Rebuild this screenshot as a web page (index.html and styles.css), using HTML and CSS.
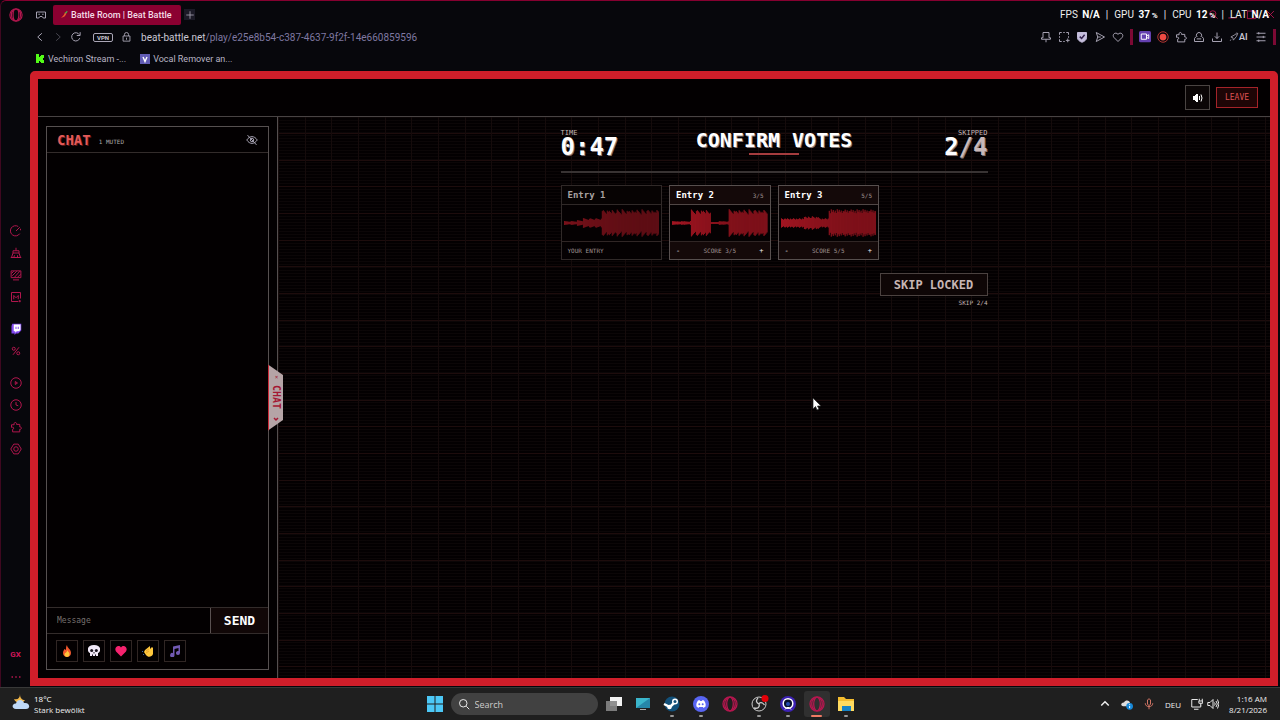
FILE: index.html
```html
<!DOCTYPE html>
<html lang="en">
<head>
    <meta charset="UTF-8">
    <meta name="viewport" content="width=device-width, initial-scale=1.0">
    <title>Battle Room | Beat Battle</title>
    <link rel="stylesheet" href="styles.css">
</head>
<body>
    <svg class="sprite" aria-hidden="true">
        <symbol id="opera" viewBox="0 0 16 16"><circle cx="8" cy="8" r="7"/><ellipse cx="8" cy="8" rx="3.3" ry="6.8"/><path d="M5.5 2C1.8 4.500 1.800 11.500 5.500 14M10.500 2c3.700 2.500 3.700 9.500 0 12"/></symbol>
        <symbol id="puzzle" viewBox="0 0 16 16"><path d="M2 5h3.500C4.500 1 9.500 1 8.700 4.500H13V8c3-.5 3 3.500 0 3v3.500H3.500V11C6 10.500 5.500 7.500 2 8.500z"/></symbol>
    </svg>

    <div class="browser">
        <div class="tab-strip">
            <button class="icon-btn opera-menu" aria-label="Opera menu"><svg class="icon pink"><use href="#opera"/></svg></button>
            <button class="icon-btn" aria-label="Workspaces"><svg class="icon" viewBox="0 0 16 16"><path d="M2 4h12v8h-3l-1.500-2h-3L5 12H2zM4.500 7h2M9.500 7h2"/></svg></button>
            <div class="tab">
                <svg class="pepper" viewBox="0 0 10 10"><path d="M8 2.500C8 6 5 9 1 9c2-1 3.500-3 5-6z" fill="#ed5a2c"/><path d="M6 3l2-.5L9 .5" stroke="#47b04b" stroke-width="1.300" fill="none"/></svg>
                <span>Battle Room | Beat Battle</span>
            </div>
            <button class="new-tab" aria-label="New tab"><svg class="icon" viewBox="0 0 16 16"><path d="M8 2v12M2 8h12"/></svg></button>
            <div class="window-buttons">
                <svg class="icon pink" viewBox="0 0 16 16"><circle cx="7" cy="7" r="4.500"/><path d="M10.500 10.500L14 14"/></svg>
                <svg class="icon pink" viewBox="0 0 16 16"><path d="M2 13h12"/></svg>
                <svg class="icon pink" viewBox="0 0 16 16"><path d="M2 3h12v11H2z"/></svg>
                <svg class="icon pink" viewBox="0 0 16 16"><path d="M3 3l10 10M13 3L3 13"/></svg>
            </div>
            <div class="stats">
                <span>FPS <b>N/A</b></span><i>|</i><span>GPU <b>37<small> %</small></b></span><i>|</i><span>CPU <b>12<small> %</small></b></span><i>|</i><span>LAT <b>N/A</b></span>
            </div>
        </div>

        <div class="address-bar">
            <div class="nav-buttons">
                <button class="icon-btn" aria-label="Back"><svg class="icon" viewBox="0 0 16 16"><path d="M10.500 3L5 8l5.500 5"/></svg></button>
                <button class="icon-btn dim" aria-label="Forward"><svg class="icon" viewBox="0 0 16 16"><path d="M5.500 3L11 8l-5.500 5"/></svg></button>
                <button class="icon-btn" aria-label="Reload"><svg class="icon" viewBox="0 0 16 16"><path d="M13 9.500A5.500 5.500 0 1 1 12.500 5M13.500 1.500V6H9"/></svg></button>
            </div>
            <span class="vpn">VPN</span>
            <svg class="icon lock" viewBox="0 0 16 16"><path d="M3 6.500h10V14H3zM5 6.500V4.500a3 3 0 0 1 6 0v2M8 9v3"/></svg>
            <div class="url">beat-battle.net<span>/play/e25e8b54-c387-4637-9f2f-14e660859596</span></div>
            <div class="extensions">
                <svg class="icon" viewBox="0 0 16 16"><path d="M4 2h8v7h2v2H2V9h2zM8 11v4"/></svg>
                <svg class="icon" viewBox="0 0 16 16"><path d="M2 5V2h3M7 2h2M11 2h3v3M14 7v2M2 7v2M2 11v3h3M7 14h2M13 10v5M10.500 12.500h5"/></svg>
                <svg class="icon" viewBox="0 0 16 16"><path d="M2 2h12v7c0 3-3 5-6 6-3-1-6-3-6-6z" fill="#c5bedd" stroke="#c5bedd"/><path d="M5 7.500L7.500 10 11.500 5" stroke="#34224e" stroke-width="2"/></svg>
                <svg class="icon" viewBox="0 0 16 16"><path d="M3 2l11 6-11 6 2-6zM5 8h4"/></svg>
                <svg class="icon" viewBox="0 0 16 16"><path d="M8 14L2.500 8.500C-.5 4.500 5 .5 8 4.500c3-4 8.500 0 5.500 4z"/></svg>
                <i class="divider"></i>
                <svg class="icon" viewBox="0 0 16 16"><rect width="16" height="15" rx="2" fill="#6440b0" stroke="none"/><path d="M3 4h7v7H3zM10 6.500l3-1.500v5l-3-1.500" stroke="#fff"/></svg>
                <svg class="icon" viewBox="0 0 16 16"><circle cx="8" cy="8" r="7" stroke="#b63633"/><circle cx="8" cy="8" r="4.500" fill="#f04a43" stroke="none"/></svg>
                <svg class="icon"><use href="#puzzle"/></svg>
                <svg class="icon" viewBox="0 0 16 16"><path d="M5.500 8a3.500 3.500 0 1 1 5 0M4 7.500L2 10v4h12v-4l-2-2.500M5 10.500h6"/></svg>
                <svg class="icon" viewBox="0 0 16 16"><path d="M8 2v8M5 7l3 3 3-3M2 10v4h12v-4"/></svg>
                <span class="ai"><svg class="icon" viewBox="0 0 16 16"><path d="M3 8l7-4 4-2-2 5-5 6-1-4zM3 12l-1 2M11 2l1-1"/></svg>AI</span>
                <svg class="icon" viewBox="0 0 16 16"><path d="M2 3h12M2 8h12M2 13h12M5 1.500v3M11 6.500v3M5 11.500v3"/></svg>
                <i class="divider"></i>
            </div>
        </div>

        <div class="bookmarks">
            <a href="#"><svg viewBox="0 0 10 10"><path d="M1 0h3v3h1V2h1V1h3v3H8v2h1v3H6V8H5V7H4v2H1z" fill="#53fc18"/></svg>Vechiron Stream -...</a>
            <a href="#"><svg viewBox="0 0 10 10"><rect width="10" height="10" fill="#625cb5"/><path d="M3 3l2 4.500L7 3" fill="none" stroke="#fff" stroke-width="1.400"/></svg>Vocal Remover an...</a>
        </div>

        <div class="workarea">
            <nav class="side-nav" aria-label="Browser sidebar">
                <svg class="icon pink" viewBox="0 0 16 16"><path d="M13 11.500A6.800 6.800 0 1 1 11 2M8 8l5-5M14 5v2"/></svg>
                <svg class="icon pink" viewBox="0 0 16 16"><path d="M8 1v4M4 5h8v3H4zM4 8l-2 6h12l-2-6M5 14l1-3M10 14v-3M1 14h14"/></svg>
                <svg class="icon pink" viewBox="0 0 16 16"><path d="M1.500 2.500h13v9h-13zM3 9l6-6M6 11l7-8M10 11l4-4M2 6l3-3M4 14.500h8"/></svg>
                <svg class="icon pink" viewBox="0 0 16 16"><path d="M14 10V2H2v12h9M5 11V6l3 3 3-3v5M13 12v3M11.500 13.500h3"/></svg>
                <svg class="icon group-start" viewBox="0 0 16 16"><path d="M3 1h12v9l-4 4H8l-2 2v-2H2V4z" fill="#8048ed" stroke="none"/><path d="M5 2h9v7l-2 2H9l-2 2v-2H5z" fill="#fff" stroke="none"/><path d="M8 5v3M11 5v3" stroke="#8048ed"/></svg>
                <svg class="icon pink" viewBox="0 0 16 16"><circle cx="5" cy="5" r="2"/><circle cx="11" cy="11" r="2"/><path d="M12 3L4 13"/></svg>
                <svg class="icon pink group-start" viewBox="0 0 16 16"><circle cx="8" cy="8" r="7"/><path d="M7 6l3 2-3 2z"/></svg>
                <svg class="icon pink" viewBox="0 0 16 16"><circle cx="8" cy="8" r="7"/><path d="M8 4v4l3 1"/></svg>
                <svg class="icon pink"><use href="#puzzle"/></svg>
                <svg class="icon pink" viewBox="0 0 16 16"><path d="M5 1.500h6L15 8l-4 6.500H5L1 8z"/><circle cx="8" cy="8" r="3"/></svg>
                <span class="gx">GX</span>
                <svg class="icon pink" viewBox="0 0 16 16"><path d="M2 8h2M7 8h2M12 8h2" stroke-width="2"/></svg>
            </nav>

            <div class="page">
                <header class="topbar">
                    <button class="sound" aria-label="Toggle sound"><svg viewBox="0 0 12 10"><path d="M1 3h2V2h1V1h2v8H4V8H3V7H1z" fill="#fff"/><path d="M7.500 3v4M9 1.500q2 3.500 0 7" fill="none" stroke="#fff"/></svg></button>
                    <button class="leave">LEAVE</button>
                </header>

                <div class="room">
                    <aside class="chat-side">
                        <section class="chat">
                            <div class="chat-head">
                                <h2>CHAT</h2>
                                <span>1 MUTED</span>
                                <button class="icon-btn" aria-label="Hide chat"><svg class="icon" viewBox="0 0 16 16"><path d="M1 8c4-6 10-6 14 0-4 6-10 6-14 0zM2 1.500l12 13"/><circle cx="8" cy="8" r="2.300"/></svg></button>
                            </div>
                            <div class="messages"></div>
                            <form class="composer">
                                <input type="text" placeholder="Message" aria-label="Message">
                                <button type="button">SEND</button>
                            </form>
                            <div class="reactions">
                                <button aria-label="Fire"><svg viewBox="0 0 12 12"><path d="M6 0c0 3 4 4 4 8 0 2.500-2 4-4 4s-4-1.500-4-4c0-2 1-3 1.500-4L5 5C5 3 5 1 6 0z" fill="#f4582d"/><path d="M6.500 5c0 2 2 2 2 4 0 4-5 3.500-5 .5C3.500 8 6 7.500 6.500 5z" fill="#ffc43a"/></svg></button>
                                <button aria-label="Skull"><svg viewBox="0 0 12 12"><path d="M6 0c8 0 7 7 4 8v3H2V8C-1 7-2 0 6 0z" fill="#f1e9f7"/><circle cx="3.700" cy="5.500" r="1.500" fill="#17121c"/><circle cx="8.300" cy="5.500" r="1.500" fill="#17121c"/><path d="M6 7v1.500M4.500 9.500V11M7.500 9.500V11" stroke="#17121c"/></svg></button>
                                <button aria-label="Heart"><svg viewBox="0 0 12 12"><path d="M6 11.500L1 6.500C-1.500 2.500 3.500-1 6 2.500c2.500-3.500 7.500 0 5 4z" fill="#f5226e"/></svg></button>
                                <button aria-label="Clap"><svg viewBox="0 0 12 12"><path d="M3 5l5-4v3l2-2 1 1v6c-1 3-5 4-7 1L2 7z" fill="#ffc83d"/><path d="M4 6l3-2M4 8l3-2" stroke="#dd912b" stroke-width=".7"/><path d="M0 6l1 1M1 9l1 1" stroke="#3c67a9"/></svg></button>
                                <button aria-label="Music"><svg viewBox="0 0 12 12"><path d="M4 1.500L11 0v8a2 2 0 1 1-1.500-2V3l-4 1v6A2.200 2.200 0 1 1 4 8z" fill="#7159b2"/></svg></button>
                            </div>
                        </section>
                        <button class="chat-toggle">
                            <small>×</small>
                            <span>CHAT</span>
                            <svg viewBox="0 0 6 6"><path d="M1 2l2 2 2-2" fill="none" stroke="#a41833" stroke-width="1.500"/></svg>
                        </button>
                    </aside>

                    <main class="stage">
                        <div class="voting">
                            <div class="vote-head">
                                <div class="counter"><small>TIME</small><strong>0:47</strong></div>
                                <h1>CONFIRM VOTES</h1>
                                <div class="counter skipped"><small>SKIPPED</small><strong>2<em>/4</em></strong></div>
                            </div>
                            <div class="entries">
                                <article class="entry own">
                                    <header><h3>Entry 1</h3></header>
                                    <svg class="wave" data-wave="1" viewBox="0 0 96 30" preserveAspectRatio="none"><path/></svg>
                                    <footer><span>YOUR ENTRY</span></footer>
                                </article>
                                <article class="entry">
                                    <header><h3>Entry 2</h3><span>3/5</span></header>
                                    <svg class="wave" data-wave="2" viewBox="0 0 96 30" preserveAspectRatio="none"><path/></svg>
                                    <footer><button aria-label="Lower score">-</button><span>SCORE 3/5</span><button aria-label="Raise score">+</button></footer>
                                </article>
                                <article class="entry">
                                    <header><h3>Entry 3</h3><span>5/5</span></header>
                                    <svg class="wave" data-wave="3" viewBox="0 0 96 30" preserveAspectRatio="none"><path/></svg>
                                    <footer><button aria-label="Lower score">-</button><span>SCORE 5/5</span><button aria-label="Raise score">+</button></footer>
                                </article>
                            </div>
                            <div class="skip">
                                <button>SKIP LOCKED</button>
                                <small>SKIP 2/4</small>
                            </div>
                        </div>
                    </main>
                </div>
            </div>
        </div>
    </div>

    <div class="taskbar">
        <div class="weather">
            <svg viewBox="0 0 18 16"><path d="M8 0c0 4 2 6 5 6-3 5-10 3-11-1 4 1 6-1 6-5z" fill="#f2b84b"/><path d="M4 15c-5 0-4-6 0-5.500C5 5 11 5 12 9c6-1 7 6 2 6z" fill="#bfd9f7"/></svg>
            <div><b>18°C</b><span>Stark bewölkt</span></div>
        </div>
        <div class="apps">
            <button class="app" aria-label="Start"><svg viewBox="0 0 16 16"><path d="M0 0h7.500v7.500H0zM8.500 0H16v7.500H8.500zM0 8.500h7.500V16H0zM8.500 8.500H16V16H8.500z" fill="#4cc8f6"/></svg></button>
            <label class="search">
                <svg class="icon" viewBox="0 0 16 16"><circle cx="7" cy="7" r="5"/><path d="M11 11l4 4"/></svg>
                <input type="text" placeholder="Search">
            </label>
            <button class="app" aria-label="Task view"><svg viewBox="0 0 16 16"><path d="M4 1h12v9H4z" fill="#f2f2f2"/><path d="M0 5h11v10H0z" fill="#858585" opacity=".9"/></svg></button>
            <button class="app" aria-label="Desktop"><svg viewBox="0 0 16 16"><path d="M1 2h14v10H1z" fill="#3bb6cb"/><path d="M1 12L15 2v10z" fill="#2687a9"/><path d="M5 13.500h6" stroke="#aaa"/></svg></button>
            <button class="app running" aria-label="Steam"><svg viewBox="0 0 16 16"><circle cx="8" cy="8" r="7.500" fill="#125079"/><path d="M0 8l6 3 5-5" stroke="#fff" stroke-width="2.500" fill="none"/><circle cx="11" cy="5.500" r="3" fill="#fff"/><circle cx="11" cy="5.500" r="1.500" fill="#125079"/><circle cx="5.500" cy="11" r="2.300" fill="#fff"/></svg></button>
            <button class="app running" aria-label="Discord"><svg viewBox="0 0 16 16"><circle cx="8" cy="8" r="8" fill="#5865f2"/><path d="M5 4.500L6.500 4l.5 1h2l.5-1 1.500.5c1.500 2 2 4 1.500 6L10.500 12l-.5-1H6l-.5 1-2-1.500c-.5-2 0-4 1.500-6z" fill="#fff"/><circle cx="6.300" cy="8.300" r="1" fill="#5865f2"/><circle cx="9.700" cy="8.300" r="1" fill="#5865f2"/></svg></button>
            <button class="app" aria-label="Opera"><svg class="icon pink"><use href="#opera"/></svg></button>
            <button class="app running" aria-label="OBS"><svg viewBox="0 0 16 16"><circle cx="8" cy="8" r="7" fill="#222" stroke="#ccc"/><path d="M7 2c-3 3-1 5 1 6M13.500 9c-2-3-5-3-5.500-1M3 12c4 1 6-1 5-4" fill="none" stroke="#ccc" stroke-width="1.300"/><circle cx="14" cy="2.500" r="3.500" fill="#e40008"/></svg></button>
            <button class="app running" aria-label="Recorder"><svg viewBox="0 0 16 16"><circle cx="8" cy="8" r="8" fill="#3d22b4"/><circle cx="8" cy="7.500" r="4.800" fill="#07102b" stroke="#fff" stroke-width="1.500"/><path d="M5 13.500l2-2h2l2 2" stroke="#fff" fill="none"/><circle cx="8" cy="8" r="2" fill="#244bb1"/></svg></button>
            <button class="app running active" aria-label="Opera GX"><svg class="icon pink"><use href="#opera"/></svg></button>
            <button class="app running" aria-label="Explorer"><svg viewBox="0 0 16 16"><path d="M0 1h6l2 2h8v12H0z" fill="#f5bd2f"/><path d="M0 5h16v10H0z" fill="#ffdb60"/><path d="M4 10h9v5H4z" fill="#1684c8"/></svg></button>
        </div>
        <div class="tray">
            <svg class="icon" viewBox="0 0 16 16"><path d="M3 10l5-5 5 5" stroke-width="2"/></svg>
            <svg class="icon" viewBox="0 0 16 16"><path d="M3 11c-5-1-2-6 1-5 2-4 8-3 8 1v4z" fill="#ddd" stroke="none"/><circle cx="11.500" cy="11" r="4.500" fill="#1688d8" stroke="none"/><path d="M11.500 10.500v3M11.500 8v1" stroke="#fff"/></svg>
            <svg class="icon mic" viewBox="0 0 16 16"><path d="M6 2.500q2-3 4 0v6q-2 3-4 0zM3 7c0 6 10 6 10 0M8 11.500V15"/></svg>
            <span class="lang">DEU</span>
            <div class="net">
                <svg class="icon" viewBox="0 0 16 16"><path d="M9 2H1v10h12V9M4 15h6M11 1v3M15 1v3M10.500 4h5v3h-5zM13 7v3"/></svg>
                <svg class="icon" viewBox="0 0 16 16"><path d="M1 6h3l4-4v12l-4-4H1zM10 6q2 2 0 4M12 4q3.500 4 0 8M14 2q4 6 0 12"/></svg>
            </div>
            <div class="clock"><span>1:16 AM</span><span>8/21/2026</span></div>
        </div>
    </div>

    <svg class="cursor" viewBox="0 0 10 14" aria-hidden="true"><path d="M1 1v11l2.500-2.500L5 13l2-1-1.500-3H9z" fill="#fff" stroke="#222" stroke-width=".7"/></svg>

    <script src="script.js"></script>
</body>
</html>
```
FILE: styles.css
```css
* {
    box-sizing: border-box;
}

body {
    margin: 0;
    height: 100vh;
    display: flex;
    flex-direction: column;
    overflow: hidden;
    background: #07070c;
    color: #c9c6d2;
    font-family: Roboto, "Liberation Sans", sans-serif;
    font-size: 9px;
}

h1, h2, h3 {
    margin: 0;
}

button, input {
    font-family: inherit;
    color: inherit;
    background: none;
    border: none;
    padding: 0;
    margin: 0;
}

button {
    cursor: pointer;
}

.sprite {
    position: absolute;
    width: 0;
    height: 0;
}

.icon {
    display: block;
    flex: none;
    width: 12px;
    height: 12px;
    fill: none;
    stroke: #aaa6b6;
    stroke-width: 1.3;
}

.icon.pink {
    stroke: #b5174f;
}

.icon-btn {
    display: flex;
}

.dim {
    opacity: 0.4;
}

/* browser chrome */
.browser {
    flex: 1;
    min-height: 0;
    display: flex;
    flex-direction: column;
    border-top: 1px solid #850030;
    border-left: 1px solid #3f0820;
    border-top-left-radius: 6px;
}

.tab-strip {
    position: relative;
    display: flex;
    align-items: center;
    height: 27px;
    padding-left: 8px;
}

.opera-menu .icon {
    width: 14px;
    height: 14px;
}

.opera-menu {
    margin-right: 12px;
}

.tab {
    display: flex;
    align-items: center;
    gap: 3px;
    width: 128px;
    height: 20px;
    margin: 0 3px 0 6px;
    padding-left: 7px;
    background: #8b0031;
    border-radius: 2px;
    color: #f3dce6;
    font-weight: 500;
    white-space: nowrap;
    font-size: 9px;
}

.pepper {
    width: 8px;
    height: 9px;
}

.new-tab {
    display: flex;
    align-items: center;
    justify-content: center;
    width: 11px;
    height: 11px;
    background: #1b1926;
}

.new-tab .icon {
    width: 10px;
    height: 10px;
}

.window-buttons {
    display: flex;
    gap: 8px;
    margin-left: auto;
    padding-right: 4px;
}

.window-buttons .icon {
    width: 11px;
    height: 11px;
}

.stats {
    position: absolute;
    top: 8px;
    right: 11px;
    display: flex;
    gap: 6px;
    color: #eee;
    font-size: 10px;
    line-height: 12px;
    white-space: nowrap;
}

.stats i {
    font-style: normal;
}

.stats b {
    margin-left: 2px;
    color: #fff;
}

.stats small {
    font-size: 8px;
}

.address-bar {
    display: flex;
    align-items: center;
    height: 18px;
    padding-left: 33px;
}

.nav-buttons {
    display: flex;
    gap: 6px;
    margin-right: 11px;
}

.vpn {
    padding: 0 3px;
    margin-right: 8px;
    border: 1px solid #aaa6b6;
    border-radius: 2px;
    font-size: 6px;
    font-weight: 700;
    line-height: 7px;
}

.lock {
    width: 11px;
    margin-right: 9px;
}

.url {
    font-size: 10px;
}

.url span {
    color: #7f78a1;
}

.extensions {
    display: flex;
    align-items: center;
    gap: 6px;
    margin-left: auto;
    padding-right: 4px;
}

.divider {
    width: 3px;
    height: 16px;
    background: #7c0934;
}

.ai {
    display: flex;
    align-items: center;
    width: 20px;
    font-weight: 600;
}

.ai .icon {
    width: 10px;
}

.bookmarks {
    display: flex;
    align-items: center;
    gap: 14px;
    height: 25px;
    padding-left: 34px;
}

.bookmarks a {
    display: flex;
    align-items: center;
    gap: 3px;
    color: #b9b5c5;
    text-decoration: none;
}

.bookmarks svg {
    width: 10px;
    height: 10px;
}

.workarea {
    flex: 1;
    min-height: 0;
    display: flex;
    padding: 0 2px 1px 0;
}

.side-nav {
    display: flex;
    flex-direction: column;
    align-items: center;
    gap: 10px;
    width: 29px;
    padding: 154px 0 3px;
}

.group-start {
    margin-top: 10px;
}

.gx {
    margin-top: auto;
    color: #d0165a;
    font-size: 8px;
    font-weight: 700;
    line-height: 12px;
}

/* battle room */
.page {
    flex: 1;
    min-width: 0;
    display: flex;
    flex-direction: column;
    border: 8px solid #d01e2a;
    border-radius: 5px 5px 0 0;
    background: #030001;
    font-family: "DejaVu Sans Mono", "Liberation Mono", monospace;
}

.topbar {
    display: flex;
    align-items: center;
    justify-content: flex-end;
    gap: 6px;
    height: 38px;
    padding-right: 12px;
    border-bottom: 1px solid #484343;
}

.sound {
    display: flex;
    align-items: center;
    justify-content: center;
    width: 25px;
    height: 25px;
    border: 1px solid #4a4442;
    background: #0b0606;
}

.sound svg {
    width: 12px;
    height: 10px;
}

.leave {
    width: 42px;
    height: 21px;
    border: 1px solid #a42329;
    background: #1e0506;
    color: #dc5152;
    font-size: 8px;
}

.room {
    flex: 1;
    min-height: 0;
    display: flex;
}

.chat-side {
    position: relative;
    display: flex;
    width: 240px;
    padding: 9px 8px 8px;
    border-right: 1px solid #544f4f;
}

.chat {
    flex: 1;
    display: flex;
    flex-direction: column;
    min-width: 0;
    border: 1px solid #565050;
}

.chat-head {
    display: flex;
    align-items: center;
    gap: 8px;
    height: 26px;
    padding: 0 10px;
    border-bottom: 1px solid #332c2b;
}

.chat-head h2 {
    color: #e35a58;
    font-size: 14px;
    text-shadow: 1px 1px #54171a;
}

.chat-head span {
    color: #aaa;
    font-size: 6px;
    padding-top: 3px;
}

.chat-head button {
    margin-left: auto;
}

.messages {
    flex: 1;
}

.composer {
    display: flex;
    height: 27px;
    border: solid #332c2b;
    border-width: 1px 0;
}

.composer input {
    flex: 1;
    min-width: 0;
    padding-left: 10px;
    font-size: 8px;
}

.composer input::placeholder {
    color: #77706f;
}

.composer button {
    width: 58px;
    border-left: 1px solid #5a5151;
    background: #110707;
    color: #fff;
    font-size: 13px;
    font-weight: 700;
}

.reactions {
    display: flex;
    gap: 5px;
    padding: 6px 9px 7px;
}

.reactions button {
    display: flex;
    align-items: center;
    justify-content: center;
    width: 22px;
    height: 22px;
    border: 1px solid #302624;
}

.reactions svg {
    width: 12px;
    height: 12px;
}

.chat-toggle {
    position: absolute;
    top: 50%;
    right: -6px;
    z-index: 1;
    display: flex;
    align-items: center;
    justify-content: space-between;
    width: 15px;
    height: 66px;
    padding: 8px 0 9px;
    transform: translateY(-50%);
    background: #b5a4a6;
    border-left: 1px solid #ca2b39;
    clip-path: polygon(0 0, 100% 16%, 100% 84%, 0 100%);
    color: #a41833;
    font-size: 10px;
    line-height: 14px;
    writing-mode: vertical-rl;
}

.chat-toggle span {
    font-weight: 700;
}

.chat-toggle small {
    font-size: 6px;
}

.chat-toggle svg {
    width: 6px;
    height: 6px;
}

/* the grid repeats every 80px with three cells in it */
.stage {
    flex: 1;
    min-width: 0;
    padding-top: 13px;
    background:
        repeating-linear-gradient(90deg, #150b0b 0 1px, transparent 1px 27px, #150b0b 27px 28px, transparent 28px 53px, #150b0b 53px 54px, transparent 54px 80px),
        repeating-linear-gradient(transparent 0 16px, #1d0c0c 16px 17px, transparent 17px 43px, #1d0c0c 43px 44px, transparent 44px 69px, #1d0c0c 69px 70px, transparent 70px 80px),
        repeating-linear-gradient(rgba(255, 190, 180, 0.03) 0 1px, transparent 1px 3px);
}

.voting {
    width: 427px;
    max-width: 100%;
    margin: 0 auto;
}

.vote-head {
    display: grid;
    grid-template-columns: 1fr auto 1fr;
    height: 43px;
    margin-bottom: 12px;
    border-bottom: 2px solid #383333;
}

.counter {
    display: flex;
    flex-direction: column;
    line-height: 7px;
}

.counter small {
    color: #c3b5b4;
    font-size: 7px;
}

.counter strong {
    color: #fff;
    font-size: 24px;
    line-height: 20px;
    text-shadow: 1px 1px #857674;
}

.counter em {
    color: #c9b9b9;
    font-style: normal;
}

.skipped {
    align-items: flex-end;
}

.vote-head h1 {
    color: #fff;
    font-size: 20px;
    line-height: 20px;
    text-shadow: 1px 1px #857674;
}

.vote-head h1::after {
    content: "";
    display: block;
    width: 50px;
    height: 2px;
    margin: 3px auto 0;
    background: #a53c3e;
}

.entries {
    display: grid;
    grid-template-columns: repeat(4, 1fr);
    gap: 7px;
}

.entry {
    border: 1px solid #574f4e;
    background: #050102;
}

.entry header {
    display: flex;
    align-items: center;
    justify-content: space-between;
    height: 19px;
    padding: 0 6px;
    border-bottom: 1px solid #514746;
    background: #140909;
}

.entry h3 {
    color: #fff;
    font-size: 9px;
}

.entry header span, .entry footer {
    color: #a09493;
    font-size: 6px;
}

.entry.own {
    border-color: #302928;
}

.entry.own header {
    border-color: #302928;
    background: #070303;
}

.entry.own h3 {
    color: #a9a1a1;
}

.wave {
    display: block;
    width: calc(100% - 4px);
    height: 30px;
    margin: 3px 2px;
}

.wave path {
    fill: none;
    stroke: #a51622;
    stroke-width: 1;
}

.own .wave path {
    stroke: #7b121b;
}

.entry footer {
    display: flex;
    align-items: center;
    justify-content: space-between;
    height: 18px;
    padding: 0 6px;
    border-top: 1px solid #302625;
    background: #140909;
}

.entry.own footer {
    background: none;
}

.entry footer button {
    color: #eee;
    font-size: 7px;
}

.skip {
    display: flex;
    flex-direction: column;
    align-items: flex-end;
    gap: 3px;
    margin-top: 13px;
}

.skip button {
    width: 108px;
    height: 23px;
    border: 1px solid #4b4240;
    background: #0e0606;
    color: #c6b5b4;
    font-size: 12px;
    font-weight: 700;
}

.skip small {
    color: #c3b5b4;
    font-size: 6px;
}

/* windows taskbar */
.taskbar {
    display: grid;
    grid-template-columns: 1fr auto 1fr;
    align-items: center;
    height: 33px;
    border-top: 1px solid #383838;
    background: #1f1f1f;
    color: #eee;
    font-family: "Open Sans", "Noto Sans", sans-serif;
    font-size: 8px;
    line-height: 11px;
}

.weather {
    display: flex;
    gap: 4px;
    padding-left: 12px;
}

.weather svg {
    width: 18px;
    height: 18px;
}

.weather b, .weather span {
    display: block;
    font-weight: 400;
}

.weather b {
    color: #fff;
}

.apps {
    display: flex;
    align-items: center;
    gap: 3px;
}

.app {
    position: relative;
    display: flex;
    align-items: center;
    justify-content: center;
    width: 26px;
    height: 26px;
    border-radius: 3px;
}

.app svg {
    width: 16px;
    height: 16px;
    overflow: visible;
}

.app.active {
    background: #303030;
}

.app.running::after {
    content: "";
    position: absolute;
    bottom: 0;
    width: 4px;
    height: 2px;
    border-radius: 1px;
    background: #999;
}

.app.active::after {
    width: 11px;
    background: #f07b64;
}

.search {
    display: flex;
    align-items: center;
    gap: 5px;
    width: 147px;
    height: 22px;
    padding-left: 7px;
    border-radius: 11px;
    background: #414141;
}

.search .icon {
    stroke: #eee;
}

.search input {
    width: 100px;
    font-size: 9px;
}

.search input::placeholder {
    color: #ccc;
}

.tray {
    display: flex;
    align-items: center;
    justify-content: flex-end;
    gap: 10px;
    padding-right: 13px;
}

.tray .icon {
    stroke: #eee;
}

.tray .mic {
    stroke: #d77767;
}

.net {
    display: flex;
    gap: 4px;
}

.clock {
    text-align: right;
}

.clock span {
    display: block;
}

.cursor {
    position: absolute;
    left: 812px;
    top: 397px;
    width: 10px;
    height: 14px;
}
```
FILE: script.js
```js
// [start, end, amplitude, gap between pulses] along a 96 unit wide track
const waves = {
    1: [[0, 13, 2, 7], [13, 19, 3, 6], [19, 38, 5, 6], [38, 96, 14, 5]],
    2: [[0, 19, 2, 9], [19, 39, 14, 5], [39, 47, 1, 9], [47, 57, 2, 9], [57, 96, 14, 5]],
    3: [[0, 23, 5, 3], [23, 38, 7, 4], [38, 48, 5, 3], [48, 96, 14, 2]]
};

document.querySelectorAll('.wave').forEach(svg => {
    const id = Number(svg.dataset.wave);
    let d = '';

    waves[id].forEach(([start, end, amp, pulse]) => {
        for (let x = start; x < end; x++) {
            const beat = 1 - ((x - start) % pulse) / pulse;
            const noise = ((x * 37 + id * 11) % 13) / 13;
            const h = Math.max(1, amp * (0.55 + beat * 0.3 + noise * 0.15));
            d += `M${x + 0.5} ${(15 - h).toFixed(1)}V${(15 + h).toFixed(1)}`;
        }
    });

    svg.querySelector('path').setAttribute('d', d);
});
```
